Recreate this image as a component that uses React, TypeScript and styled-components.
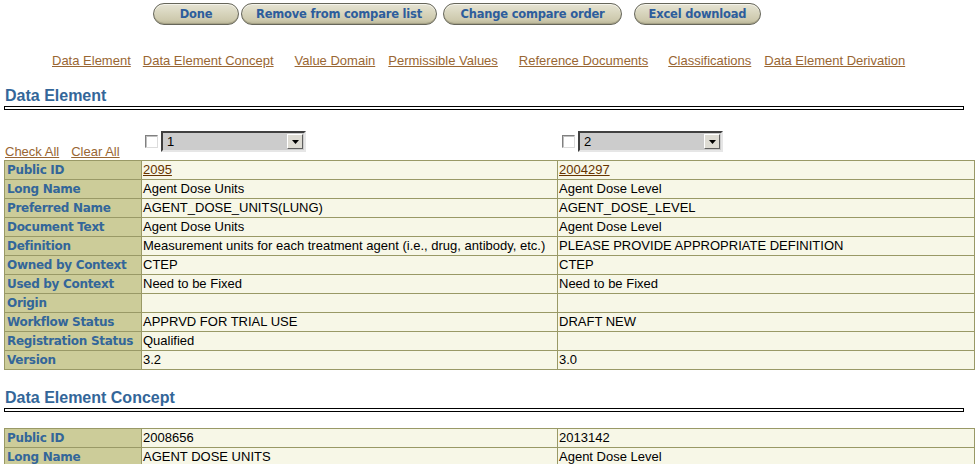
import React from "react";
import styled, { createGlobalStyle } from "styled-components";

const GlobalStyle = createGlobalStyle`
  html, body { margin: 0; padding: 0; background: #ffffff; }
  body {
    font-family: "Liberation Sans", Arial, sans-serif;
    font-size: 13px;
    color: #000000;
  }
`;

const Page = styled.div`
  padding: 3px 0 0 4px;
  width: 971px;
`;

const ButtonBar = styled.div`
  display: flex;
  padding-left: 149px;
`;

const PillButton = styled.button<{ $w: number; $ml: number }>`
  box-sizing: border-box;
  width: ${(p) => p.$w}px;
  height: 22px;
  margin: 0 0 0 ${(p) => p.$ml}px;
  padding: 0;
  border: 1px solid #66665a;
  border-radius: 11px;
  background: linear-gradient(#e6e4d4 0%, #d8d5bd 45%, #cdc9ad 80%, #b9b597 100%);
  box-shadow: inset 0 1px 0 #f4f3ea, inset 0 -1px 0 #a6a287;
  font-family: "DejaVu Sans", Verdana, sans-serif;
  font-weight: bold;
  font-size: 11.5px;
  letter-spacing: -0.2px;
  line-height: 20px;
  color: #2d5d9c;
  text-align: center;
  cursor: pointer;
`;

const NavBar = styled.div`
  display: flex;
  margin-top: 28px;
  padding-left: 48px;
  line-height: 15px;
`;

const NavLink = styled.a<{ $ml: number }>`
  margin-left: ${(p) => p.$ml}px;
  color: #996633;
  text-decoration: underline;
  font-size: 13px;
  white-space: nowrap;
`;

const Heading = styled.div<{ $mt: number }>`
  margin: ${(p) => p.$mt}px 0 0 1px;
  font-family: "Liberation Sans", Arial, sans-serif;
  font-weight: bold;
  font-size: 16px;
  line-height: 19px;
  color: #336699;
`;

const Rule = styled.div`
  margin-top: 1px;
  width: 958px;
  height: 2px;
  border: 1px solid #000000;
  border-bottom-width: 1.5px;
`;

const Controls = styled.div`
  display: flex;
  height: 50px;
`;

const ControlLabelCol = styled.div`
  width: 137px;
  flex-shrink: 0;
  display: flex;
  align-items: flex-end;
  padding: 0 0 1px 1px;
  box-sizing: border-box;
  line-height: 15px;
`;

const SmallLink = styled.a<{ $ml?: number }>`
  margin-left: ${(p) => p.$ml ?? 0}px;
  color: #996633;
  text-decoration: underline;
  white-space: nowrap;
`;

const ControlCol = styled.div<{ $pl: number }>`
  width: 416px;
  flex-shrink: 0;
  box-sizing: border-box;
  padding: 21px 0 0 ${(p) => p.$pl}px;
`;

const PickRow = styled.div`
  display: flex;
  align-items: center;
`;

const CheckBox = styled.span`
  box-sizing: border-box;
  width: 13px;
  height: 13px;
  margin-right: 3px;
  background: #ffffff;
  border: 1px solid;
  border-color: #808080 #dcdcdc #dcdcdc #808080;
  box-shadow: inset 1px 1px 0 #c0c0c0;
`;

const SelectBox = styled.div`
  box-sizing: border-box;
  width: 145px;
  height: 21px;
  display: flex;
  align-items: center;
  justify-content: space-between;
  background: #cccccc;
  border: 2px solid;
  border-color: #404040 #e6e6e6 #e6e6e6 #404040;
  padding: 0 1px 0 4px;
  font-size: 13px;
`;

const SelectArrow = styled.span`
  box-sizing: border-box;
  width: 16px;
  height: 15px;
  display: flex;
  align-items: center;
  justify-content: center;
  background: #dedcd4;
  border: 1px solid;
  border-color: #ffffff #606060 #606060 #ffffff;
`;

const Table = styled.table<{ $mt?: number }>`
  margin-top: ${(p) => p.$mt ?? 0}px;
  width: 970px;
  border-collapse: collapse;
  table-layout: fixed;
  border: 1px solid #999966;
`;

const LabelCell = styled.td`
  padding: 0 2px;
  height: 18px;
  line-height: 18px;
  background: #cccc99;
  border: 1px solid #999966;
  font-family: "DejaVu Sans", Verdana, sans-serif;
  font-weight: bold;
  font-size: 12px;
  letter-spacing: -0.3px;
  color: #336699;
  white-space: nowrap;
  overflow: hidden;
`;

const ValueCell = styled.td`
  padding: 0 1px;
  height: 18px;
  line-height: 18px;
  background: #f7f7e7;
  border: 1px solid #999966;
  font-size: 13px;
  white-space: nowrap;
  overflow: hidden;
`;

const IdLink = styled.a`
  color: #663300;
  text-decoration: underline;
`;

type Row = { label: string; a: string; b: string; link?: boolean };

const deRows: Row[] = [
  { label: "Public ID", a: "2095", b: "2004297", link: true },
  { label: "Long Name", a: "Agent Dose Units", b: "Agent Dose Level" },
  { label: "Preferred Name", a: "AGENT_DOSE_UNITS(LUNG)", b: "AGENT_DOSE_LEVEL" },
  { label: "Document Text", a: "Agent Dose Units", b: "Agent Dose Level" },
  {
    label: "Definition",
    a: "Measurement units for each treatment agent (i.e., drug, antibody, etc.)",
    b: "PLEASE PROVIDE APPROPRIATE DEFINITION",
  },
  { label: "Owned by Context", a: "CTEP", b: "CTEP" },
  { label: "Used by Context", a: "Need to be Fixed", b: "Need to be Fixed" },
  { label: "Origin", a: "", b: "" },
  { label: "Workflow Status", a: "APPRVD FOR TRIAL USE", b: "DRAFT NEW" },
  { label: "Registration Status", a: "Qualified", b: "" },
  { label: "Version", a: "3.2", b: "3.0" },
];

const decRows: Row[] = [
  { label: "Public ID", a: "2008656", b: "2013142" },
  { label: "Long Name", a: "AGENT DOSE UNITS", b: "Agent Dose Level" },
];

const CompareTable: React.FC<{ rows: Row[]; mt?: number }> = ({ rows, mt }) => (
  <Table $mt={mt}>
    <colgroup>
      <col style={{ width: 137 }} />
      <col style={{ width: 416 }} />
      <col style={{ width: 417 }} />
    </colgroup>
    <tbody>
      {rows.map((r) => (
        <tr key={r.label}>
          <LabelCell>{r.label}</LabelCell>
          <ValueCell>{r.link ? <IdLink href="#">{r.a}</IdLink> : r.a}</ValueCell>
          <ValueCell>{r.link ? <IdLink href="#">{r.b}</IdLink> : r.b}</ValueCell>
        </tr>
      ))}
    </tbody>
  </Table>
);

const Picker: React.FC<{ value: string }> = ({ value }) => (
  <PickRow>
    <CheckBox />
    <SelectBox>
      <span>{value}</span>
      <SelectArrow>
        <svg width="7" height="4" viewBox="0 0 7 4">
          <path d="M0 0 H7 L3.5 4 Z" fill="#000" />
        </svg>
      </SelectArrow>
    </SelectBox>
  </PickRow>
);

const buttons = [
  { t: "Done", w: 86, ml: 0 },
  { t: "Remove from compare list", w: 196, ml: 2 },
  { t: "Change compare order", w: 179, ml: 6 },
  { t: "Excel download", w: 127, ml: 12 },
];

const navs = [
  { t: "Data Element", ml: 0 },
  { t: "Data Element Concept", ml: 12 },
  { t: "Value Domain", ml: 21 },
  { t: "Permissible Values", ml: 13 },
  { t: "Reference Documents", ml: 21 },
  { t: "Classifications", ml: 20 },
  { t: "Data Element Derivation", ml: 13 },
];

export default function App() {
  return (
    <>
      <GlobalStyle />
      <Page>
        <ButtonBar>
          {buttons.map((b) => (
            <PillButton key={b.t} $w={b.w} $ml={b.ml}>
              {b.t}
            </PillButton>
          ))}
        </ButtonBar>
        <NavBar>
          {navs.map((n) => (
            <NavLink key={n.t} href="#" $ml={n.ml}>
              {n.t}
            </NavLink>
          ))}
        </NavBar>

        <Heading $mt={18}>Data Element</Heading>
        <Rule />
        <Controls>
          <ControlLabelCol>
            <SmallLink href="#">Check All</SmallLink>
            <SmallLink href="#" $ml={12}>
              Clear All
            </SmallLink>
          </ControlLabelCol>
          <ControlCol $pl={4}>
            <Picker value="1" />
          </ControlCol>
          <ControlCol $pl={5}>
            <Picker value="2" />
          </ControlCol>
        </Controls>
        <CompareTable rows={deRows} />

        <Heading $mt={18}>Data Element Concept</Heading>
        <Rule />
        <CompareTable rows={decRows} mt={16} />
      </Page>
    </>
  );
}
